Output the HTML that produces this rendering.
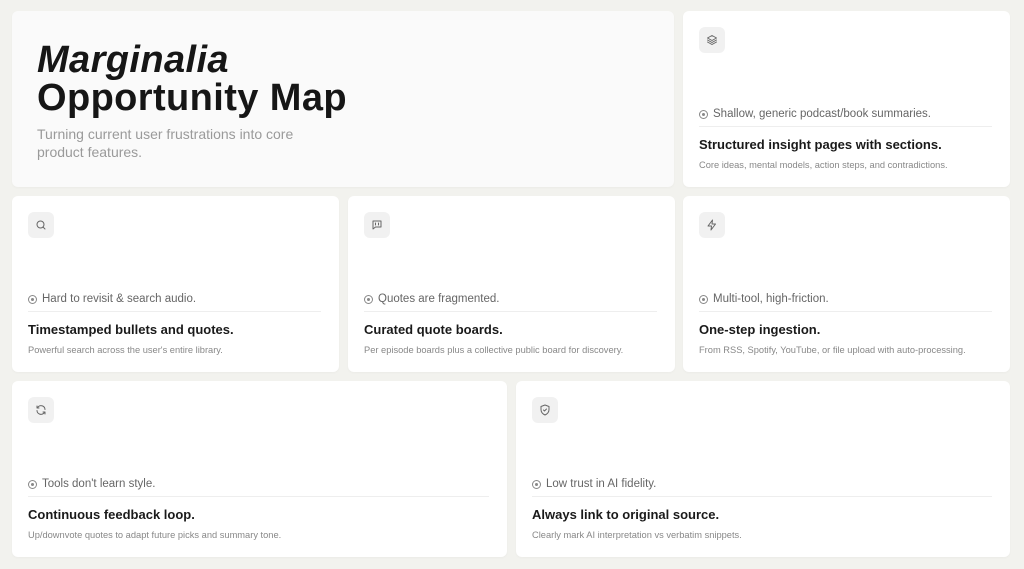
<!DOCTYPE html>
<html><head><meta charset="utf-8"><style>
*{margin:0;padding:0;box-sizing:border-box}
body{width:1024px;height:569px;background:#f2f2ee;font-family:"Liberation Sans",sans-serif;position:relative;overflow:hidden}
.c{position:absolute;background:#fff;border-radius:6px;box-shadow:0 1px 2px rgba(0,0,0,.03)}
.hero{background:#fafafa}
.ic{position:absolute;left:16px;top:16px;width:26px;height:26px;border-radius:6px;background:#f1f1f1;display:flex;align-items:center;justify-content:center}
.ic svg{width:12px;height:12px;fill:none;stroke:#666;stroke-width:2;stroke-linecap:round;stroke-linejoin:round}
.pb{position:absolute;left:16px;top:97px;font-size:11.5px;color:#666;white-space:nowrap;display:flex;align-items:center}
.pb i{display:inline-block;width:9px;height:9px;border:1px solid #888;border-radius:50%;margin-right:5px;position:relative}
.pb i:after{content:"";position:absolute;left:2px;top:2px;width:3px;height:3px;border-radius:50%;background:#888}
.dv{position:absolute;left:16px;right:18px;top:115px;height:1px;background:#eee}
.t{position:absolute;left:16px;top:126px;font-size:13px;font-weight:bold;color:#1a1a1a;white-space:nowrap}
.d{position:absolute;left:16px;top:149px;font-size:9.3px;color:#888;white-space:nowrap}
</style></head><body>
<div class="c hero" style="left:12px;top:11px;width:662px;height:176px">
<div style="position:absolute;left:25px;top:30px;font-size:38px;font-weight:bold;color:#161616;line-height:38px;letter-spacing:0.4px"><i>Marginalia</i><br>Opportunity Map</div>
<div style="position:absolute;left:25px;top:114px;font-size:14px;color:#9a9a9a;line-height:18px">Turning current user frustrations into core<br>product features.</div>
</div>
<div class="c" style="left:683px;top:11px;width:327px;height:176px">
<div class="ic"><svg viewBox="0 0 24 24"><path d="M12 3 3 8l9 5 9-5z M3 12l9 5 9-5 M3 16l9 5 9-5"/></svg></div>
<div class="pb"><i></i>Shallow, generic podcast/book summaries.</div><div class="dv"></div>
<div class="t">Structured insight pages with sections.</div>
<div class="d">Core ideas, mental models, action steps, and contradictions.</div></div>

<div class="c" style="left:12px;top:196px;width:327px;height:176px">
<div class="ic"><svg viewBox="0 0 24 24"><circle cx="11" cy="11" r="7"/><path d="m20 20-4-4"/></svg></div>
<div class="pb"><i></i>Hard to revisit &amp; search audio.</div><div class="dv"></div>
<div class="t">Timestamped bullets and quotes.</div>
<div class="d">Powerful search across the user's entire library.</div></div>

<div class="c" style="left:348px;top:196px;width:327px;height:176px">
<div class="ic"><svg viewBox="0 0 24 24"><path d="M4 4h16v12H9l-5 4z M9 8v4 M15 8v4"/></svg></div>
<div class="pb"><i></i>Quotes are fragmented.</div><div class="dv"></div>
<div class="t">Curated quote boards.</div>
<div class="d">Per episode boards plus a collective public board for discovery.</div></div>

<div class="c" style="left:683px;top:196px;width:327px;height:176px">
<div class="ic"><svg viewBox="0 0 24 24"><path d="M13 2 4 14h7l-1 8 9-12h-7z"/></svg></div>
<div class="pb"><i></i>Multi-tool, high-friction.</div><div class="dv"></div>
<div class="t">One-step ingestion.</div>
<div class="d">From RSS, Spotify, YouTube, or file upload with auto-processing.</div></div>

<div class="c" style="left:12px;top:381px;width:495px;height:176px">
<div class="ic"><svg viewBox="0 0 24 24"><path d="M20 11a8 8 0 0 0-14-5l-2 2 M4 4v4h4 M4 13a8 8 0 0 0 14 5l2-2 M20 20v-4h-4"/></svg></div>
<div class="pb"><i></i>Tools don't learn style.</div><div class="dv"></div>
<div class="t">Continuous feedback loop.</div>
<div class="d">Up/downvote quotes to adapt future picks and summary tone.</div></div>

<div class="c" style="left:516px;top:381px;width:494px;height:176px">
<div class="ic"><svg viewBox="0 0 24 24"><path d="M12 2 4 5v6c0 5 3.5 9 8 11 4.5-2 8-6 8-11V5z M9 12l2 2 4-4"/></svg></div>
<div class="pb"><i></i>Low trust in AI fidelity.</div><div class="dv"></div>
<div class="t">Always link to original source.</div>
<div class="d">Clearly mark AI interpretation vs verbatim snippets.</div></div>
</body></html>
